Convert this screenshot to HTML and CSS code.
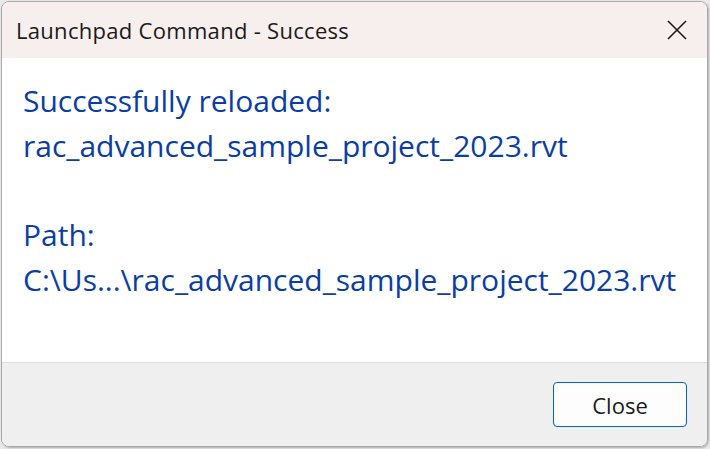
FILE: index.html
```html
<!DOCTYPE html>
<html>
<head>
<meta charset="utf-8">
<link rel="stylesheet" href="styles.css">
</head>
<body>
<div class="window">
  <div class="titlebar">
    <span class="title">Launchpad Command - Success</span>
    <span class="close-x">
      <svg width="20" height="20" viewBox="0 0 20 20"><path d="M1 1 L19 19 M19 1 L1 19" stroke="#1a1a1a" stroke-width="1.6" fill="none"/></svg>
    </span>
  </div>
  <div class="content">
    <p class="line">Successfully reloaded:</p>
    <p class="line">rac_advanced_sample_project_2023.rvt</p>
    <p class="line">&nbsp;</p>
    <p class="line">Path:</p>
    <p class="line">C:\Us...\rac_advanced_sample_project_2023.rvt</p>
  </div>
  <div class="footer">
    <button class="btn">Close</button>
  </div>
</div>
</body>
</html>
```
FILE: styles.css
```css
html, body {
  margin: 0;
  padding: 0;
  background: #e9e9e9;
  width: 710px;
  height: 449px;
  overflow: hidden;
}
body {
  padding: 1px 2px 2px 1px;
  box-sizing: border-box;
}
.window {
  box-sizing: border-box;
  width: 707px;
  height: 446px;
  border: 1px solid #a9a9a9;
  border-radius: 8px;
  overflow: hidden;
  display: flex;
  flex-direction: column;
  font-family: "Open Sans", "Noto Sans", sans-serif;
  box-shadow: 1px 1px 2px rgba(0,0,0,0.25);
}
.titlebar {
  height: 56px;
  background: #f7efee;
  display: flex;
  align-items: center;
  justify-content: space-between;
  padding: 0 20px 0 14px;
  flex-shrink: 0;
}
.title {
  font-size: 22px;
  line-height: 28px;
  color: #1a1a1a;
  letter-spacing: 0.3px;
  margin-bottom: 1px;
}
.close-x {
  display: flex;
  width: 20px;
  height: 20px;
  margin-top: 0px;
}
.content {
  flex: 1;
  background: #ffffff;
  padding: 21px 0 0 21px;
}
.line {
  margin: 0;
  font-size: 30px;
  line-height: 44.8px;
  color: #0a3ea5;
  white-space: nowrap;
}
.footer {
  height: 84px;
  flex-shrink: 0;
  background: #efefef;
  border-top: 1px solid #dcdcdc;
  display: flex;
  justify-content: flex-end;
  align-items: flex-start;
  padding: 19px 20px 0 0;
  box-sizing: border-box;
}
.btn {
  width: 134px;
  height: 45px;
  background: #fdfdfd;
  border: 1px solid #0067c0;
  border-radius: 4px;
  font-family: "Open Sans", "Noto Sans", sans-serif;
  font-size: 22px;
  color: #1a1a1a;
  padding: 0;
}
```
